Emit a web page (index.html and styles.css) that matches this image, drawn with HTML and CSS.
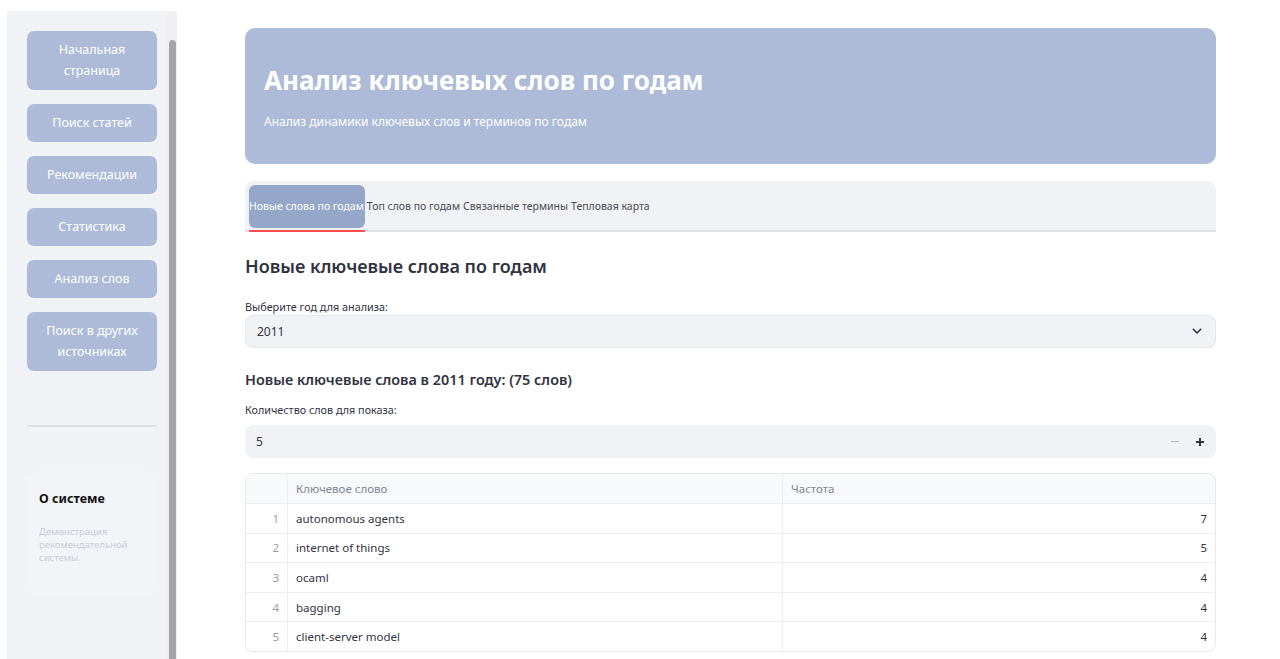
FILE: index.html
```html
<!DOCTYPE html>
<html lang="ru">
<head>
<meta charset="utf-8">
<title>Анализ ключевых слов по годам</title>
<link rel="stylesheet" href="styles.css">
</head>
<body>
<div class="app">
  <aside class="sidebar">
    <div class="sidebar-inner">
      <nav class="nav">
        <button class="nav-btn">Начальная<br>страница</button>
        <button class="nav-btn">Поиск статей</button>
        <button class="nav-btn">Рекомендации</button>
        <button class="nav-btn">Статистика</button>
        <button class="nav-btn">Анализ слов</button>
        <button class="nav-btn">Поиск в других<br>источниках</button>
      </nav>
      <hr class="divider">
      <div class="about">
        <div class="about-title">О системе</div>
        <div class="about-text">Демонстрация рекомендательной системы.</div>
      </div>
    </div>
    <div class="scroll-track"><div class="scroll-thumb"></div></div>
  </aside>

  <main class="main">
    <header class="banner">
      <h1 class="banner-title">Анализ ключевых слов по годам</h1>
      <p class="banner-sub">Анализ динамики ключевых слов и терминов по годам</p>
    </header>

    <div class="tabs">
      <div class="tab active">Новые слова по годам</div>
      <div class="tab">Топ слов по годам</div>
      <div class="tab">Связанные термины</div>
      <div class="tab">Тепловая карта</div>
    </div>

    <h2 class="section-title">Новые ключевые слова по годам</h2>

    <label class="field-label">Выберите год для анализа:</label>
    <div class="select">
      <span>2011</span>
      <svg class="chevron" width="10" height="7" viewBox="0 0 10 7"><path d="M1.3 1.3 L5 5 L8.7 1.3" fill="none" stroke="#31333f" stroke-width="1.6" stroke-linecap="round" stroke-linejoin="round"/></svg>
    </div>

    <h3 class="sub-title">Новые ключевые слова в 2011 году: (75 слов)</h3>

    <label class="field-label second">Количество слов для показа:</label>
    <div class="number">
      <span>5</span>
      <div class="steppers">
        <span class="step minus"></span>
        <svg class="step plus" width="10" height="10" viewBox="0 0 10 10"><path d="M5 1 V9 M1 5 H9" stroke="#31333f" stroke-width="2"/></svg>
      </div>
    </div>

    <div class="table">
      <div class="row head">
        <div class="c idx"></div>
        <div class="c kw">Ключевое слово</div>
        <div class="c fq">Частота</div>
      </div>
      <div class="row"><div class="c idx">1</div><div class="c kw">autonomous agents</div><div class="c fq num">7</div></div>
      <div class="row"><div class="c idx">2</div><div class="c kw">internet of things</div><div class="c fq num">5</div></div>
      <div class="row"><div class="c idx">3</div><div class="c kw">ocaml</div><div class="c fq num">4</div></div>
      <div class="row"><div class="c idx">4</div><div class="c kw">bagging</div><div class="c fq num">4</div></div>
      <div class="row"><div class="c idx">5</div><div class="c kw">client-server model</div><div class="c fq num">4</div></div>
    </div>
  </main>
</div>
</body>
</html>
```

FILE: styles.css
```css
* { box-sizing: border-box; }

html, body {
  margin: 0;
  padding: 0;
  background: #ffffff;
  height: 100%;
  overflow: hidden;
}

body {
  font-family: "Noto Sans", "Open Sans", sans-serif;
  color: #31333f;
}

.app {
  display: flex;
  height: 659px;
}

/* ---------- sidebar ---------- */
.sidebar {
  margin: 11px 0 0 7px;
  width: 170px;
  background: #f0f2f6;
  display: flex;
  flex-shrink: 0;
}

.sidebar-inner {
  width: 160px;
  padding: 20px 10px 0 20px;
}

.nav {
  display: flex;
  flex-direction: column;
  gap: 14px;
}

.nav-btn {
  width: 130px;
  border: none;
  border-radius: 7px;
  background: #adbbd8;
  color: #ffffff;
  font-family: inherit;
  font-size: 12.5px;
  line-height: 21px;
  padding: 8px 4px 9px;
  text-align: center;
}

.divider {
  border: none;
  height: 2px;
  background: #dcdee3;
  margin: 54px 0 0;
}

.about {
  margin-top: 44px;
  height: 125px;
  border-radius: 9px;
  background: #f3f4f8;
  padding: 18px 12px;
}

.about-title {
  font-weight: 700;
  font-size: 12.5px;
  color: #111;
  line-height: 20px;
}

.about-text {
  margin-top: 16px;
  font-size: 9.5px;
  line-height: 13px;
  color: #c8ccd5;
}

.scroll-track {
  width: 10px;
  background: #f0f0f1;
  padding: 29px 1px 0 2px;
}

.scroll-thumb {
  width: 7px;
  height: 100%;
  background: #a3a3a8;
  border-radius: 4px 4px 0 0;
}

/* ---------- main ---------- */
.main {
  flex: 1;
  padding: 28px 64px 0 68px;
  display: flex;
  flex-direction: column;
}

.banner {
  height: 136px;
  background: #adbbd8;
  border-radius: 10px;
  padding: 35px 19px 0;
}

.banner-title {
  margin: 0;
  font-size: 26px;
  line-height: 34px;
  font-weight: 700;
  color: #ffffff;
}

.banner-sub {
  margin: 17px 0 0;
  font-size: 12px;
  line-height: 16px;
  color: #ffffff;
}

.tabs {
  margin-top: 17px;
  height: 51px;
  background: #f0f2f6;
  border-radius: 8px 8px 0 0;
  border-bottom: 2px solid #e0e2e7;
  display: flex;
  align-items: flex-start;
  padding: 4px 0 0 4px;
}

.tab {
  font-size: 10.5px;
  line-height: 43px;
  color: #4a4c58;
  white-space: nowrap;
  padding-right: 3px;
}

.tab.active {
  background: #94a7c9;
  color: #ffffff;
  border-radius: 6px;
  padding-right: 1px;
  margin-right: 2px;
  position: relative;
}

.tab.active::after {
  content: "";
  position: absolute;
  left: 0;
  right: 0;
  bottom: -4px;
  height: 2px;
  background: #ff4b4b;
}

.section-title {
  margin: 21px 0 0;
  font-size: 18px;
  line-height: 26px;
  font-weight: 600;
  color: #31333f;
}

.field-label {
  margin-top: 20px;
  font-size: 10.8px;
  line-height: 16px;
  color: #31333f;
}

.select {
  margin-top: 0;
  height: 33px;
  background: #f0f2f6;
  border: 1px solid #e4e6ec;
  border-radius: 8px;
  display: flex;
  align-items: center;
  justify-content: space-between;
  padding: 0 13px 0 11px;
  font-size: 12px;
}

.sub-title {
  margin: 20px 0 0;
  font-size: 14.4px;
  line-height: 24px;
  font-weight: 600;
  color: #31333f;
}

.field-label.second { margin-top: 10px; }

.number {
  margin-top: 7px;
  height: 33px;
  background: #f0f2f6;
  border-radius: 8px;
  display: flex;
  align-items: center;
  justify-content: space-between;
  padding: 0 11px 0 11px;
  font-size: 12px;
}

.steppers {
  display: flex;
  gap: 16px;
  align-items: center;
}

.step.minus {
  width: 8px;
  height: 1.5px;
  background: #b4b6bd;
}

.step.plus { display: block; }

.table {
  margin-top: 15px;
  border: 1px solid #e6e8ed;
  border-radius: 8px;
  overflow: hidden;
  font-size: 11.5px;
}

.row {
  display: flex;
  height: 29.6px;
  border-top: 1px solid #eceef2;
}

.row.head {
  border-top: none;
  height: 29px;
  background: #f8f9fb;
  color: #808495;
}

.c {
  display: flex;
  align-items: center;
  padding: 0 8px;
  white-space: nowrap;
}

.idx {
  width: 42px;
  justify-content: flex-end;
  color: #9a9ca6;
  border-right: 1px solid #eceef2;
  background: #f8f9fb;
}

.row:not(.head) .idx { background: #ffffff; }

.kw {
  width: 495px;
  border-right: 1px solid #eceef2;
  color: #31333f;
}

.row.head .kw { color: #808495; }

.fq {
  flex: 1;
}

.fq.num {
  justify-content: flex-end;
  color: #31333f;
}
```
